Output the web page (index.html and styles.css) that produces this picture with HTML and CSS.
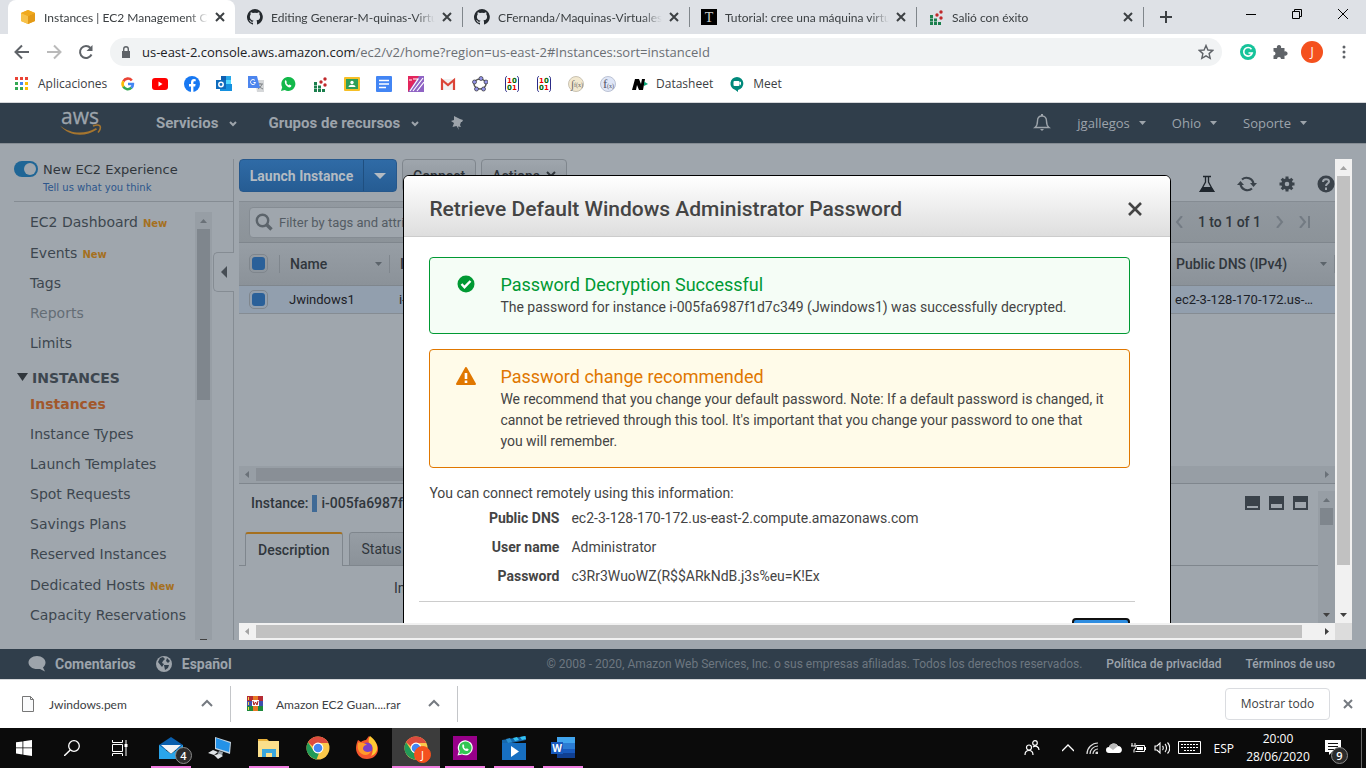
FILE: index.html
```html
<!DOCTYPE html>
<html lang="es">
<head>
<meta charset="utf-8">
<title>Instances | EC2 Management Console</title>
<link rel="stylesheet" href="styles.css">
</head>
<body>
<svg class="defs" aria-hidden="true">
  <symbol id="x" viewBox="0 0 16 16"><path d="M4 4l8 8M12 4l-8 8" stroke="currentColor" stroke-width="2" fill="none"/></symbol>
  <symbol id="github" viewBox="0 0 16 16"><path fill="#24292e" d="M8 0a8 8 0 0 0-2.500 15.600c.4.1.5-.2.5-.4v-1.500c-2.200.5-2.700-.9-2.700-.9-.4-.9-.9-1.200-.9-1.200-.7-.5.1-.5.1-.5.8.1 1.200.8 1.200.8.7 1.300 1.900.9 2.300.7.1-.5.3-.9.5-1.100-1.800-.2-3.600-.9-3.600-4 0-.8.3-1.600.8-2.100-.1-.2-.4-1 .1-2.100 0 0 .7-.2 2.200.8a7.500 7.500 0 0 1 4 0c1.500-1 2.200-.8 2.200-.8.400 1.100.2 1.900.1 2.100.5.600.8 1.300.8 2.100 0 3.100-1.900 3.700-3.700 3.900.3.300.6.8.6 1.500v2.200c0 .2.100.5.600.4A8 8 0 0 0 8 0z"/></symbol>
  <symbol id="dots" viewBox="0 0 16 16"><path fill="#1b7f4d" d="M2 6h3v3H2zM2 9.500h3v3H2zM6 9.500h3v3H6zM2 13h3v3H2zM6 13h3v3H6zM10 13h3v3h-3z"/><g fill="#c0292b"><circle cx="9" cy="6" r="1.700"/><circle cx="13" cy="3" r="1.700"/><circle cx="13" cy="9" r="1.700"/></g></symbol>
  <symbol id="chrome" viewBox="0 0 24 24"><circle cx="12" cy="12" r="11.500" fill="#fbc84a"/><path fill="#dc4b3e" d="M2 6.300A11.500 11.500 0 0 1 22.300 7H12a5 5 0 0 0-4.800 3.700z"/><path fill="#229a58" d="M2 6.300l5.500 8.200A5 5 0 0 0 13 17l-2.500 6.400A11.500 11.500 0 0 1 2 6.300z"/><circle cx="12" cy="12" r="5.400" fill="#fff"/><circle cx="12" cy="12" r="4.300" fill="#4285f4"/></symbol>
  <symbol id="up" viewBox="0 0 17 17"><path fill="currentColor" d="M5 11h7L8.500 7z"/></symbol>
  <symbol id="down" viewBox="0 0 17 17"><path fill="currentColor" d="M5 7h7l-3.500 4z"/></symbol>
  <symbol id="left" viewBox="0 0 17 17"><path fill="currentColor" d="M10 5v7L6 8.500z"/></symbol>
  <symbol id="right" viewBox="0 0 17 17"><path fill="currentColor" d="M7 5v7l4-3.500z"/></symbol>
  <symbol id="chev" viewBox="0 0 12 12"><path d="M1 8l5-5 5 5" stroke="currentColor" stroke-width="2" fill="none"/></symbol>
  <symbol id="matrix" viewBox="0 0 16 16"><path d="M3 .5C1.500.5 1.500 2 1.500 3v10c0 1 0 2.500 1.500 2.500M13 .5c1.500 0 1.500 1.500 1.500 2.500v10c0 1 0 2.500-1.500 2.500" fill="none" stroke="#2b2b87"/><g font-family="DejaVu Sans" font-weight="bold" font-size="7"><text x="3" y="7" fill="#e00">1</text><text x="8" y="7" fill="#060">0</text><text x="3" y="14" fill="#060">0</text><text x="8" y="14" fill="#e00">1</text></g></symbol>
</svg>

<header class="tabstrip">
  <div class="tab tab-active">
    <svg class="i16" viewBox="0 0 16 16"><path fill="#f2b022" d="M8 1l7 3v8l-7 3-7-3V4z"/><path fill="#e39a17" d="M8 7l7-3v8l-7 3z"/><path fill="#f7c24a" d="M1 4l7 3v8l-7-3z"/><path fill="#f0a91d" d="M1 4l7-3 7 3-7 3z"/></svg>
    <span class="tab-title">Instances | EC2 Management Console</span>
    <button class="tab-x" aria-label="Cerrar"><svg class="i16"><use href="#x"/></svg></button>
  </div>
  <div class="tab"><svg class="i16"><use href="#github"/></svg><span class="tab-title">Editing Generar-M-quinas-Virtuales</span><button class="tab-x" aria-label="Cerrar"><svg class="i16"><use href="#x"/></svg></button></div>
  <div class="tab tab-line"><svg class="i16"><use href="#github"/></svg><span class="tab-title">CFernanda/Maquinas-Virtuales-en</span><button class="tab-x" aria-label="Cerrar"><svg class="i16"><use href="#x"/></svg></button></div>
  <div class="tab tab-line"><svg class="i16" viewBox="0 0 16 16"><path d="M0 0h16v16H0z"/><text x="8" y="13" fill="#ccc" font-family="Liberation Serif" font-size="14" text-anchor="middle">T</text></svg><span class="tab-title">Tutorial: cree una máquina virtual</span><button class="tab-x" aria-label="Cerrar"><svg class="i16"><use href="#x"/></svg></button></div>
  <div class="tab tab-line"><svg class="i16"><use href="#dots"/></svg><span class="tab-title">Salió con éxito</span><button class="tab-x" aria-label="Cerrar"><svg class="i16"><use href="#x"/></svg></button></div>
  <button class="tab-new tab-line" aria-label="Nueva pestaña"><svg class="i16" viewBox="0 0 16 16"><path d="M8 2v12M2 8h12" stroke="#3c4043" stroke-width="2"/></svg></button>
  <div class="win">
    <button aria-label="Minimizar"><svg class="i12" viewBox="0 0 12 12"><path d="M1 6.500h10" stroke="#000"/></svg></button>
    <button aria-label="Restaurar"><svg class="i12" viewBox="0 0 12 12"><path d="M1.500 3.500h7v7h-7zM3.500 3V1.500h7v7H9" stroke="#000" fill="none"/></svg></button>
    <button aria-label="Cerrar ventana"><svg class="i12" viewBox="0 0 12 12"><path d="M1 1l10 10M11 1L1 11" stroke="#000"/></svg></button>
  </div>
</header>

<div class="toolbar">
  <button aria-label="Atrás"><svg class="i16" viewBox="0 0 16 16"><path d="M15 8H2M8 1.500L1.500 8 8 14.500" stroke="#5f6368" stroke-width="2" fill="none"/></svg></button>
  <button aria-label="Adelante"><svg class="i16" viewBox="0 0 16 16"><path d="M1 8h13M8 1.500L14.500 8 8 14.500" stroke="#bababa" stroke-width="2" fill="none"/></svg></button>
  <button aria-label="Recargar"><svg class="i16" viewBox="0 0 16 16"><path d="M13.500 10.500A6 6 0 1 1 12.500 4" stroke="#5f6368" stroke-width="2" fill="none"/><path d="M14.500 1v6h-6z" fill="#5f6368"/></svg></button>
  <div class="omnibox">
    <svg class="i12" viewBox="0 0 12 12"><path d="M2 5h8v7H2z" fill="#5f6368"/><path d="M3.700 5V3a2.300 2.300 0 0 1 4.600 0v2" stroke="#5f6368" fill="none" stroke-width="1.400"/></svg>
    <span class="url"><b>us-east-2.console.aws.amazon.com</b>/ec2/v2/home?region=us-east-2#Instances:sort=instanceId</span>
    <svg class="i16" viewBox="0 0 16 16"><path d="M8 1.500l1.900 4.500 4.900.4-3.700 3.200 1.100 4.800L8 11.900l-4.200 2.500 1.100-4.800L1.200 6.400l4.900-.4z" fill="none" stroke="#5f6368" stroke-width="1.400"/></svg>
  </div>
  <div class="ext">
    <svg class="i16" viewBox="0 0 16 16"><circle cx="8" cy="8" r="8" fill="#15c39a"/><path d="M11.500 5.200A4.300 4.300 0 1 0 12.200 9H8.500" stroke="#fff" stroke-width="1.600" fill="none"/></svg>
    <svg class="i16" viewBox="0 0 16 16"><path fill="#5f6368" d="M1.500 4H5a2.200 2.200 0 1 1 4 0h3.500v3.500a2.200 2.200 0 1 1 0 4V15H9a2 2 0 1 0-4 0H1.500v-3.500a2 2 0 1 0 0-4z"/></svg>
    <span class="avatar">J</span>
    <svg class="i16" viewBox="0 0 16 16"><g fill="#5f6368"><circle cx="8" cy="3" r="1.500"/><circle cx="8" cy="8" r="1.500"/><circle cx="8" cy="13" r="1.500"/></g></svg>
  </div>
</div>

<nav class="bookmarks">
  <a href="#" class="bm-apps"><svg class="i14" viewBox="0 0 14 14"><path fill="#ea4335" d="M0 0h3v3H0zM5 0h3v3H5zM10 0h3v3h-3z"/><path fill="#34a853" d="M0 5h3v3H0zM0 10h3v3H0zM5 10h3v3H5z"/><path fill="#4285f4" d="M5 5h3v3H5z"/><path fill="#fbbc05" d="M10 5h3v3h-3zM10 10h3v3h-3z"/></svg>Aplicaciones</a>
  <a href="#" aria-label="Google"><svg class="i16" viewBox="0 0 16 16" fill="none" stroke-width="2.600"><path d="M3.400 5.300A5 5 0 0 1 11.800 4.500" stroke="#ea4335"/><path d="M3.400 5.300a5 5 0 0 0 0 5.400" stroke="#fbbc05"/><path d="M3.400 10.700a5 5 0 0 0 8 1" stroke="#34a853"/><path d="M11.300 11.800A5 5 0 0 0 12.900 8H8" stroke="#4285f4"/></svg></a>
  <a href="#" aria-label="YouTube"><svg class="i16" viewBox="0 0 16 16"><rect y="2" width="16" height="12" rx="3" fill="#f00"/><path d="M6.500 5.500v5l4-2.500z" fill="#fff"/></svg></a>
  <a href="#" aria-label="Facebook"><svg class="i16" viewBox="0 0 16 16"><circle cx="8" cy="8" r="8" fill="#1778f2"/><path fill="#fff" d="M7 16v-5.500H5V8h2V6.300C7 4.200 8.200 3 10 3l1.700.2v2h-1C9.700 5.200 9.400 5.700 9.400 6.500V8h2.200l-.4 2.500H9.400V16z"/></svg></a>
  <a href="#" aria-label="Outlook"><svg class="i16" viewBox="0 0 16 16"><path fill="#28a8ea" d="M5 0h10v8H5z"/><path fill="#0f5fb0" d="M5 0h5v5H5z"/><path fill="#1490df" d="M4 8h12v7H4z"/><path fill="#50d9ff" d="M10 4h5v4h-5z"/><rect y="4" width="10" height="9" fill="#0f6cbd"/><circle cx="5" cy="8.500" r="2.200" fill="none" stroke="#fff" stroke-width="1.500"/></svg></a>
  <a href="#" aria-label="Traductor"><svg class="i16" viewBox="0 0 16 16"><path fill="#d5d7d9" d="M7 4h9v12H9z"/><path d="M9 8h6M12 7v1M14 8c-1 3-3 4-4 5M10 9c1 2 3 3 5 4" stroke="#7e8285" fill="none"/><path fill="#4c85ee" d="M0 0h9l3 12H0z"/><path d="M7 4.500A2.500 2.500 0 1 0 7.500 6.500H5.500" fill="none" stroke="#fff"/></svg></a>
  <a href="#" aria-label="WhatsApp"><svg class="i16" viewBox="0 0 16 16"><path fill="#12b84a" d="M1 15l1.200-3.700A7 7 0 1 1 4.800 14z"/><path fill="#fff" d="M5 4.500l1-.2.900 1.900-.6.900c.5 1 1.300 1.700 2.400 2.200l.8-.8 1.900.9c0 1.200-.9 2-2 2C7.300 11.200 4 8 5 4.500z"/></svg></a>
  <a href="#" aria-label="Académico"><svg class="i16"><use href="#dots"/></svg></a>
  <a href="#" aria-label="Classroom"><svg class="i16" viewBox="0 0 16 16"><rect y="1" width="16" height="14" rx="1" fill="#f6bf26"/><path fill="#2e9e58" d="M2 3h12v10H2z"/><circle cx="8" cy="6.500" r="1.700" fill="#fff"/><path d="M4.500 11c0-3 7-3 7 0z" fill="#fff"/></svg></a>
  <a href="#" aria-label="Documentos"><svg class="i16" viewBox="0 0 16 16"><rect width="16" height="16" rx="1" fill="#4285f4"/><path d="M3 4.500h10M3 8h10M3 11.500h7" stroke="#fff" stroke-width="1.700"/></svg></a>
  <a href="#" aria-label="Editor"><svg class="i16" viewBox="0 0 16 16"><path fill="#8f63c4" d="M0 0h16v16H0z"/><path fill="#e3255c" d="M0 0h11L0 16z"/><path d="M1 4h3M5 3h5L2 15M15 2L5 15M16 6l-7 9" stroke="#fff" fill="none" stroke-width="1.200"/></svg></a>
  <a href="#" aria-label="Gmail"><svg class="i16" viewBox="0 0 16 16"><path fill="#f1f1f1" d="M1 3h14v11H1z"/><path fill="none" stroke="#db4437" stroke-width="2.200" d="M2 14V4l6 5 6-5v10"/></svg></a>
  <a href="#" aria-label="GeoGebra"><svg class="i16" viewBox="0 0 16 16"><ellipse cx="8" cy="8" rx="6" ry="5" fill="none" stroke="#555" stroke-width="1.400"/><g fill="#9393e8" stroke="#333" stroke-width=".7"><circle cx="9" cy="2.500" r="2"/><circle cx="2.500" cy="6" r="2"/><circle cx="14" cy="6" r="2"/><circle cx="4.500" cy="13" r="2"/><circle cx="11.500" cy="13" r="2"/></g></svg></a>
  <a href="#" aria-label="Matrices"><svg class="i16"><use href="#matrix"/></svg></a>
  <a href="#" aria-label="Matrices 2"><svg class="i16"><use href="#matrix"/></svg></a>
  <a href="#" aria-label="Integrales"><svg class="i16" viewBox="0 0 16 16"><circle cx="8" cy="8" r="7.500" fill="#f2e8cf" stroke="#c9c2b2"/><text x="3" y="12" font-family="Liberation Serif" font-size="11" fill="#666">∫</text><text x="6" y="11" font-family="Liberation Serif" font-size="6" fill="#666">f(x)</text></svg></a>
  <a href="#" aria-label="Derivadas"><svg class="i16" viewBox="0 0 16 16"><circle cx="8" cy="8" r="7.500" fill="#dfe6f7" stroke="#bcc3d4"/><text x="3" y="12" font-family="Liberation Serif" font-size="13" fill="#556">f</text><text x="7" y="12" font-family="Liberation Serif" font-size="6" fill="#556">(x)</text></svg></a>
  <a href="#"><svg class="i16" viewBox="0 0 16 16"><path d="M0 14L3 3h4l2 5 1-5h3l-2 11H7L5 9l-1 5z"/><path fill="#0ba678" d="M12 5.500l4 2.500-4 2z"/></svg>Datasheet</a>
  <a href="#" class="meet"><svg class="i16" viewBox="0 0 16 16"><path fill="#00897b" d="M8 1a6.500 6.500 0 0 1 1 12.900V16L6 13.700A6.500 6.500 0 0 1 8 1z"/><rect x="4.500" y="5" width="6" height="5" rx="1" fill="#fff"/><path fill="#fff" d="M10 7l2-1.500v4z"/></svg>Meet</a>
</nav>

<div class="awsnav">
  <a href="#" class="aws-logo" aria-label="AWS"><svg viewBox="0 0 42 30"><text x="20" y="16" font-family="Open Sans" font-size="21" fill="#9da4ab" stroke="#9da4ab" stroke-width=".3" text-anchor="middle">aws</text><path d="M0 17.500c11 9 25 9 36 2.500l1 1.500c-12 8-28 7-37-4z" fill="#a5752f"/><path d="M33 18c3-1.200 6-1.200 7 0s0 4.500-2 6.500" fill="none" stroke="#a5752f" stroke-width="1.600"/></svg></a>
  <button class="nav-main">Servicios <svg class="i10" viewBox="0 0 10 10"><path d="M2 4l3 3 3-3" stroke="currentColor" stroke-width="2" fill="none"/></svg></button>
  <button class="nav-main">Grupos de recursos <svg class="i10" viewBox="0 0 10 10"><path d="M2 4l3 3 3-3" stroke="currentColor" stroke-width="2" fill="none"/></svg></button>
  <button class="nav-pin" aria-label="Fijar"><svg class="i14" viewBox="0 0 14 14"><path fill="currentColor" d="M4 0l6 3 3 1-1 2-1 0-1 3 1 2-3-.5L9 14l-2.500-4-4 1 1.500-4L1 5l3-1z"/></svg></button>
  <div class="nav-right">
    <button aria-label="Alertas"><svg class="i18" viewBox="0 0 18 18"><path d="M2 13.500c2-1.500 2.500-4 2.500-6.500C4.500 4 6 2 9 2s4.500 2 4.500 5 .5 5 2.500 6.500z" fill="none" stroke="currentColor" stroke-width="1.400"/><path d="M7 15h4l-2 2zM8 0h2v2H8z" fill="currentColor"/></svg></button>
    <button>jgallegos <svg class="i8" viewBox="0 0 8 8"><path d="M1 2h7L4.500 6z" fill="currentColor"/></svg></button>
    <button>Ohio <svg class="i8" viewBox="0 0 8 8"><path d="M1 2h7L4.500 6z" fill="currentColor"/></svg></button>
    <button>Soporte <svg class="i8" viewBox="0 0 8 8"><path d="M1 2h7L4.500 6z" fill="currentColor"/></svg></button>
  </div>
</div>

<div class="console">
  <aside class="side">
    <div class="exp">
      <input type="checkbox" id="exp" class="switch" checked>
      <div><label for="exp">New EC2 Experience</label><a href="#">Tell us what you think</a></div>
    </div>
    <div class="side-scroll">
      <ul class="menu">
        <li class="tall"><a href="#">EC2 Dashboard</a><em>New</em></li>
        <li class="tall"><a href="#">Events</a><em>New</em></li>
        <li><a href="#">Tags</a></li>
        <li><a href="#" class="dim">Reports</a></li>
        <li><a href="#">Limits</a></li>
        <li class="group"><svg class="i12" viewBox="0 0 12 12"><path d="M1 1h11L6.500 9z" fill="#30363c"/></svg>INSTANCES</li>
        <li class="after"><a href="#" class="current">Instances</a></li>
        <li><a href="#">Instance Types</a></li>
        <li><a href="#">Launch Templates</a></li>
        <li><a href="#">Spot Requests</a></li>
        <li><a href="#">Savings Plans</a></li>
        <li><a href="#">Reserved Instances</a></li>
        <li class="tall"><a href="#">Dedicated Hosts</a><em>New</em></li>
        <li><a href="#">Capacity Reservations</a></li>
      </ul>
      <div class="sb sb-v sb-dim"><svg><use href="#up"/></svg><i class="thumb side-thumb"></i><i class="push nub"></i></div>
    </div>
    <button class="collapse" aria-label="Contraer"><svg viewBox="0 0 8 12" width="8" height="12"><path d="M7 0v12L1 6z" fill="#464d54"/></svg></button>
  </aside>

  <div class="work">
    <div class="stage">
      <main class="page">
        <div class="actions">
          <div class="split"><button>Launch Instance</button><button aria-label="Más"><svg viewBox="0 0 12 6" width="12" height="6"><path d="M0 0h12L6 6z" fill="#b4bbc2"/></svg></button></div>
          <button class="btn">Connect</button>
          <button class="btn">Actions <svg class="i10" viewBox="0 0 10 10"><path d="M1 1l4 4 4-4M1 5l4 4 4-4" stroke="currentColor" stroke-width="2" fill="none"/></svg></button>
          <div class="tools">
            <button aria-label="Laboratorio"><svg class="i18" viewBox="0 0 18 18"><path d="M5 1.500h8M7.500 2v5l-5 9.300h13L10.500 7V2" fill="none" stroke="#1f262d" stroke-width="1.300"/><path d="M4.500 12h9L17 17H1z" fill="#1f262d"/></svg></button>
            <button aria-label="Actualizar"><svg viewBox="0 0 20 18" width="20" height="18"><path d="M5 4.500A7 7 0 0 1 16.500 9M15 13.500A7 7 0 0 1 3.500 9" fill="none" stroke="#3a424a" stroke-width="2.200"/><path d="M13 8h7l-3.500 4zM0 10h7L3.500 6z" fill="#3a424a"/></svg></button>
            <button aria-label="Ajustes"><svg class="i18" viewBox="0 0 18 18"><circle cx="9" cy="9" r="4" fill="none" stroke="#3a424a" stroke-width="3.400"/><path d="M9 1.500v3M9 13.500v3M1.500 9h3M13.500 9h3M3.700 3.700l2 2M12.300 12.300l2 2M14.300 3.700l-2 2M3.700 14.300l2-2" stroke="#3a424a" stroke-width="3"/></svg></button>
            <button aria-label="Ayuda"><svg class="i18" viewBox="0 0 18 18"><circle cx="9" cy="9" r="8.500" fill="#3a424a"/><path d="M6 7c0-4 6-3.500 6-.5C12 8.500 9 8.500 9 11M9 12.500V15" fill="none" stroke="#9fa6ad" stroke-width="2"/></svg></button>
          </div>
        </div>
        <div class="filter">
          <label class="search"><svg class="i18" viewBox="0 0 18 18"><circle cx="7.500" cy="7.500" r="5.700" fill="none" stroke="#5c646b" stroke-width="2.400"/><path d="M11.500 11.500l5 5" stroke="#5c646b" stroke-width="3.400"/></svg><input type="text" aria-label="Filtro" placeholder="Filter by tags and attributes"></label>
          <div class="pager">
            <svg viewBox="0 0 8 12" width="8" height="12"><path d="M7 0L2 6l5 6" fill="none" stroke="#737b83" stroke-width="2"/></svg>
            <span>1 to 1 of 1</span>
            <svg viewBox="0 0 8 12" width="8" height="12"><path d="M1 0l5 6-5 6" fill="none" stroke="#737b83" stroke-width="2"/></svg>
            <svg viewBox="0 0 12 12" width="12" height="12"><path d="M1 0l5 6-5 6M10 0v12" fill="none" stroke="#737b83" stroke-width="2"/></svg>
          </div>
        </div>
        <table class="grid">
          <colgroup><col class="c-check"><col class="c-name"><col><col class="c-dns"></colgroup>
          <thead><tr><th><input type="checkbox" class="tick" checked aria-label="Todas"></th><th><span class="th">Name<svg class="i8" viewBox="0 0 8 8"><path d="M1 2h7L4.500 6z" fill="#5c646b"/></svg></span></th><th><span class="th">ID</span></th><th><span class="th">Public DNS (IPv4)<svg class="i8" viewBox="0 0 8 8"><path d="M1 2h7L4.500 6z" fill="#5c646b"/></svg></span></th></tr></thead>
          <tbody><tr><td><input type="checkbox" class="tick" checked aria-label="Jwindows1"></td><td>Jwindows1</td><td>i-005fa</td><td>ec2-3-128-170-172.us-…</td></tr></tbody>
        </table>
        <div class="sb sb-h sb-dim grid-sb"><svg><use href="#left"/></svg><i class="thumb"></i><svg class="push"><use href="#right"/></svg></div>
        <section class="detail">
          <div class="detail-body">
            <div class="detail-head"><b>Instance:</b><i class="mark"></i><b>i-005fa6987f</b>
              <div class="panes"><i class="pane p1"></i><i class="pane p2"></i><i class="pane p3"></i></div></div>
            <div class="dtabs"><button class="dtab on">Description</button><button class="dtab">Status</button></div>
            <p class="field">Instance</p>
          </div>
          <div class="sb sb-v sb-dim"><svg><use href="#up"/></svg><i class="thumb detail-thumb"></i><svg class="push dark"><use href="#down"/></svg></div>
        </section>
      </main>

      <div class="overlay">
        <div class="modal" role="dialog" aria-labelledby="mt">
          <div class="modal-head"><h2 id="mt">Retrieve Default Windows Administrator Password</h2><button aria-label="Cerrar"><svg class="i14" viewBox="0 0 14 14"><path d="M1 1l12 12M13 1L1 13" stroke="#444" stroke-width="2.600"/></svg></button></div>
          <div class="modal-body">
            <div class="alert ok">
              <svg class="i18" viewBox="0 0 18 18"><circle cx="9" cy="9" r="8.500" fill="#093"/><path d="M4.500 9l3 3.200L13.500 6" fill="none" stroke="#fff" stroke-width="2.400"/></svg>
              <div><h3>Password Decryption Successful</h3><p>The password for instance i-005fa6987f1d7c349 (Jwindows1) was successfully decrypted.</p></div>
            </div>
            <div class="alert warn">
              <svg viewBox="0 0 20 18" width="20" height="18"><path d="M10 1l9 16H1z" fill="#e07700" stroke="#e07700" stroke-width="2" stroke-linejoin="round"/><path d="M10 6v6M10 13.500V16" stroke="#fff" stroke-width="2.600"/></svg>
              <div><h3>Password change recommended</h3><p>We recommend that you change your default password. Note: If a default password is changed, it cannot be retrieved through this tool. It's important that you change your password to one that you will remember.</p></div>
            </div>
            <p class="lead">You can connect remotely using this information:</p>
            <dl class="info">
              <dt>Public DNS</dt><dd>ec2-3-128-170-172.us-east-2.compute.amazonaws.com</dd>
              <dt>User name</dt><dd>Administrator</dd>
              <dt>Password</dt><dd>c3Rr3WuoWZ(R$$ARkNdB.j3s%eu=K!Ex</dd>
            </dl>
          </div>
          <div class="modal-foot"><button aria-label="Close"></button></div>
        </div>
      </div>
    </div>
    <div class="sb sb-v"><svg class="soft"><use href="#up"/></svg><i class="thumb stage-v"></i><svg class="push dark"><use href="#down"/></svg></div>
    <div class="sb sb-h"><svg class="soft"><use href="#left"/></svg><i class="thumb stage-h"></i><svg class="push dark"><use href="#right"/></svg></div>
    <div class="corner"></div>
  </div>
</div>

<footer class="awsfoot">
  <a href="#" class="strong"><svg class="i18" viewBox="0 0 18 18"><path fill="currentColor" d="M9 1c5 0 8.500 3 8.500 6.500 0 2-1 3.800-2.500 5l2 4-5-2.600C5 15 .5 11.500.5 7.500.5 4 4 1 9 1z"/></svg>Comentarios</a>
  <a href="#" class="strong"><svg class="i18" viewBox="0 0 18 18"><circle cx="9" cy="9" r="8" fill="currentColor"/><path fill="#303e4b" d="M5 3l3-1 2 2-2 2-1 2 2 1-2 3-4-5zM12 3l3 3-2 2-2-2zM9 10l5 0-1 3-3 2z"/></svg>Español</a>
  <span class="copy">© 2008 - 2020, Amazon Web Services, Inc. o sus empresas afiliadas. Todos los derechos reservados.</span>
  <a href="#">Política de privacidad</a>
  <a href="#">Términos de uso</a>
</footer>

<div class="downloads">
  <div class="dl"><svg class="i16" viewBox="0 0 16 16"><path d="M2.500.5h8l3 3v12h-11z" fill="#fafbfc" stroke="#777"/><path d="M10.500.5v3h3" fill="none" stroke="#777"/></svg><span>Jwindows.pem</span><button aria-label="Opciones"><svg class="i12"><use href="#chev"/></svg></button></div>
  <div class="dl"><svg class="i16" viewBox="0 0 16 16"><path fill="#b52b34" d="M0 0h16v5H0z"/><path fill="#3f4fae" d="M0 5h16v5H0z"/><path fill="#1e8a3c" d="M0 10h16v5H0z"/><path fill="#e87a25" d="M6 0h5v15H6z"/><path fill="#fff" d="M5 4h7v6H5z"/><path d="M6 5l1 4 1.500-3L10 9l1-4" stroke="#a11" fill="none"/><path d="M1.500 1v3M1.500 6v3M1.500 11v3" stroke="#f5d54a"/></svg><span>Amazon EC2 Guan....rar</span><button aria-label="Opciones"><svg class="i12"><use href="#chev"/></svg></button></div>
  <button class="showall">Mostrar todo</button>
  <button class="dl-x" aria-label="Cerrar"><svg class="i16"><use href="#x"/></svg></button>
</div>

<div class="taskbar">
  <div class="sys">
    <button aria-label="Inicio"><svg class="i16" viewBox="0 0 16 16"><path fill="#fff" d="M0 2.300L6.500 1.400v6.100H0zM7.300 1.300L16 0v7.500H7.300zM0 8.300h6.500v6.200L0 13.600zM7.300 8.300H16V16l-8.700-1.300z"/></svg></button>
    <button aria-label="Buscar"><svg class="i16" viewBox="0 0 16 16"><circle cx="10" cy="6" r="5.300" fill="none" stroke="#fff" stroke-width="1.300"/><path d="M6.300 10L0 16" stroke="#fff" stroke-width="1.500"/></svg></button>
    <button aria-label="Vista de tareas"><svg class="i16" viewBox="0 0 16 16"><path d="M.5 0v2.500h10V0M.5 16v-2.500h10V16M.5 4.500h10v7H.5zM14 0v16" fill="none" stroke="#fff"/><path fill="#fff" d="M12.500 4h3v3h-3z"/></svg></button>
  </div>
  <div class="apps">
    <button class="app run" aria-label="Correo"><svg class="i24" viewBox="0 0 24 24"><path fill="#0a5fae" d="M0 9L12 1l12 8v5H0z"/><path fill="#f2f4f7" d="M2 9h20l-10 9z"/><path fill="#2aa5ea" d="M0 9l12 9 12-9v14H0z"/></svg><span class="badge">4</span></button>
    <button class="app" aria-label="Equipo"><svg class="i24" viewBox="0 0 24 24"><path fill="#c3d4e2" d="M7 1l16 5-1 12-15-5z"/><path fill="#2492e8" d="M8 2l14 5-1 9-13-4z"/><path fill="#9aa3aa" d="M11 15l4 1-1 4-5-1z"/><path fill="#dfe3e6" d="M0 17l5-3 5 2-4 3zM6 19l6-1 3 2-5 3z"/></svg></button>
    <button class="app run" aria-label="Explorador"><svg class="i24" viewBox="0 0 24 24"><path fill="#e9b13b" d="M1 3h9l2 2h10v3H1z"/><path fill="#fbdf8b" d="M1 5h21v16H1z"/><path fill="#3aa7dd" d="M5 21v-8h14v8h-4v-4H9v4z"/></svg></button>
    <button class="app" aria-label="Chrome"><svg class="i24"><use href="#chrome"/></svg></button>
    <button class="app" aria-label="Firefox"><svg class="i24" viewBox="0 0 24 24"><path fill="#f5562d" d="M12 23C5 23 1 18 1 12c0-3 1-6 2-8l3 2c1-1 3-2 5-2l3-4c1 2 4 3 6 6 2 2 3 4 3 7 0 6-5 10-11 10z"/><path fill="#ffc933" d="M15 0c5 4 8 8 7 14-1 3-3 5-6 6 3-5 2-10-2-13-1-3 0-5 1-7z"/><circle cx="12" cy="12" r="5.500" fill="#7b3fc9"/><path fill="#ff9a2b" d="M3 7c3-1 7 0 9 2-3 0-4 2-4 4 1 3 5 4 8 2-1 4-6 5-9 3-4-2-5-7-4-11z"/></svg></button>
    <button class="app run on" aria-label="Chrome J"><svg class="i24"><use href="#chrome"/></svg><span class="badge badge-j">J</span></button>
    <button class="app run" aria-label="WhatsApp"><svg class="i24" viewBox="0 0 24 24"><path fill="#980089" d="M0 0h24v24H0z"/><path fill="#fff" d="M4.500 19.500l1.200-4A7.500 7.500 0 1 1 9 18.600z"/><path fill="#34c653" d="M6 18.200l.9-3A6.300 6.300 0 1 1 9.200 17.400z"/><path fill="#fff" d="M9.500 8.500l1-.2.900 1.900-.6.800c.5 1 1.200 1.600 2.200 2.100l.8-.8 1.800.9c0 1.200-.9 1.800-1.900 1.800-2.400-.1-5.200-3-4.200-6.500z"/></svg></button>
    <button class="app run" aria-label="Películas"><svg class="i24" viewBox="0 0 24 24"><path fill="#1668ad" d="M0 4l24-4v4L0 9z"/><path fill="#35c4f2" d="M11 2l4-1 2 3-4 1zM18 1l5-1 1 3-4 1z"/><path fill="#2a8fd0" d="M4 3l4-1 2 4-4 1z"/><path fill="#176fc1" d="M0 7h24v17H0z"/><path fill="#fff" d="M9 10v11l8-5.500z"/></svg></button>
    <button class="app run" aria-label="Word"><svg class="i24" viewBox="0 0 24 24"><path fill="#41a5ee" d="M6 1h18v6H6z"/><path fill="#2b7cd3" d="M6 7h18v6H6z"/><path fill="#185abd" d="M6 13h18v4H6z"/><path fill="#103f91" d="M6 17h18v5H6z"/><path fill="#185abd" d="M0 6h12v12H0z"/><text x="6" y="16" font-family="Open Sans" font-size="10" font-weight="bold" fill="#fff" text-anchor="middle">W</text></svg></button>
  </div>
  <div class="tray">
    <svg class="i16" viewBox="0 0 16 16" fill="none" stroke="#fff" stroke-width="1.200"><circle cx="5" cy="7.500" r="2.500"/><path d="M1 15c0-6 8-6 8 0"/><circle cx="11" cy="3" r="2.300"/><path d="M9 7c3-2 6 0 6 3"/></svg>
    <svg class="i12 t-chev" viewBox="0 0 12 12"><path d="M0 9l6-6 6 6" fill="none" stroke="#fff" stroke-width="1.300"/></svg>
    <svg class="i12" viewBox="0 0 12 12" fill="none" stroke="#ddd" stroke-width="1.200"><path d="M1 12A11 11 0 0 1 12 1M4 12a8 8 0 0 1 8-8M7 12a5 5 0 0 1 5-5"/><circle cx="11" cy="11" r="1" fill="#fff"/></svg>
    <svg class="i16" viewBox="0 0 16 16"><path fill="#fff" d="M3 13a3 3 0 0 1 0-6c1-4 7-5 9-1 5 0 5 7 1 7z"/><path fill="#bbb" d="M3 7c1-4 7-5 9-1l-5 4z"/></svg>
    <svg class="i16" viewBox="0 0 16 16"><path d="M6 5.500h8.500v6H5.500M2 3v3M5 3v3M1 6h5v2L4 9.500v3" fill="none" stroke="#fff"/><path fill="#fff" d="M7 7h6v3H7zM15 7h1v3h-1z"/></svg>
    <svg class="i16" viewBox="0 0 16 16" fill="none" stroke="#fff" stroke-width="1.100"><path d="M1 6h2l3-3v10l-3-3H1zM8.500 6c1 1 1 3 0 4M11 4c2 2 2 6 0 8M13.500 2.500c3 3 3 8 0 11"/></svg>
    <svg viewBox="0 0 24 14" width="24" height="14"><path d="M.5.500h22v12H.5z" fill="none" stroke="#fff"/><path d="M3 3.500h18M3 6.500h18M6 9.500h11" stroke="#fff" stroke-dasharray="2 1"/></svg>
    <span class="lang">ESP</span>
    <span class="clock">20:00<br>28/06/2020</span>
    <div class="note"><svg class="i16" viewBox="0 0 16 16"><path fill="#fff" d="M0 0h16v12H7l-3 3v-3H0z"/><path d="M3 3.500h10M3 6.500h10M3 9.500h6" stroke="#111"/></svg><span class="badge">9</span></div>
    <i class="peek"></i>
  </div>
</div>
</body>
</html>
```

FILE: styles.css
```css
* { box-sizing: border-box; }
body { margin: 0; height: 100vh; display: flex; flex-direction: column; overflow: hidden; background: #9fa6ad; font: 12px "Open Sans", "Noto Sans", sans-serif; color: #3c4043; }
button { border: 0; padding: 0; background: none; font: inherit; color: inherit; display: flex; align-items: center; justify-content: center; }
a { color: inherit; text-decoration: none; }
svg { display: block; flex: none; }
p, h2, h3, dl, dd, ul { margin: 0; padding: 0; }
.defs { width: 0; height: 0; position: absolute; }
.i8 { width: 8px; height: 8px; }
.i10 { width: 10px; height: 10px; }
.i12 { width: 12px; height: 12px; }
.i14 { width: 14px; height: 14px; }
.i16 { width: 16px; height: 16px; }
.i18 { width: 18px; height: 18px; }
.i24 { width: 24px; height: 24px; }

/* browser tabs */
.tabstrip { flex: none; height: 34px; display: flex; padding-left: 8px; background: #dee1e6; }
.tab { width: 227px; display: flex; align-items: center; gap: 8px; padding: 0 7px 0 12px; position: relative; }
.tab-active { background: #fff; border-radius: 8px 8px 0 0; }
.tab-line { position: relative; }
.tab-line::before { content: ""; position: absolute; left: 0; top: 7px; height: 20px; width: 1px; background: #80868b; }
.tab-title { flex: 1; font-family: Lato, sans-serif; white-space: nowrap; overflow: hidden; mask-image: linear-gradient(90deg, #000 88%, transparent); }
.tab-x { margin-left: -4px; }
.tab-new { width: 46px; }
.win { margin-left: auto; display: flex; height: 28px; }
.win button { width: 46px; }

/* toolbar */
.toolbar { flex: none; height: 35px; display: flex; align-items: center; gap: 16px; padding: 1px 14px; background: #fff; }
.omnibox { flex: 1; height: 28px; display: flex; align-items: center; gap: 10px; padding: 0 8px 0 10px; margin-right: 2px; border-radius: 14px; background: #f1f3f4; }
.url { flex: 1; font-size: 13px; color: #6b6f74; white-space: nowrap; }
.url b { font-weight: 400; color: #202124; }
.ext { display: flex; align-items: center; gap: 16px; }
.ext .avatar { margin: 0 -3px; }
.avatar { width: 22px; height: 22px; border-radius: 50%; background: #f4511e; color: #fff; text-align: center; line-height: 22px; }

/* bookmarks */
.bookmarks { flex: none; height: 34px; display: flex; align-items: center; gap: 16px; padding: 0 15px 4px; background: #fff; border-bottom: 1px solid #d5d7da; }
.bookmarks a { display: flex; align-items: center; gap: 8px; }
.bookmarks .bm-apps { gap: 9px; width: 89px; }

/* console header */
.awsnav { flex: none; height: 40px; display: flex; align-items: center; padding-left: 60px; background: #303e4b; color: #9da4ab; }
.aws-logo svg { width: 42px; height: 30px; }
.nav-main { font: 700 15px Roboto, sans-serif; gap: 10px; margin-left: 54px; }
.nav-main + .nav-main { margin-left: 30px; }
.nav-pin { margin-left: 30px; }
.nav-right { margin-left: auto; display: flex; align-items: center; gap: 26px; padding-right: 59px; font-size: 13px; }
.nav-right button { gap: 8px; }

.console { flex: 1; min-height: 0; display: flex; padding: 15px 14px 9px; border-top: 1px solid #858c93; }

/* side menu */
.side { flex: none; width: 220px; display: flex; flex-direction: column; position: relative; border-right: 1px solid #858c93; font-family: "DejaVu Sans", sans-serif; font-size: 14px; color: #3d464f; margin-right: 5px; }
.exp { height: 43px; display: flex; gap: 5px; padding-top: 2px; border-bottom: 1px solid #858c93; }
.exp label { display: block; font-size: 13px; line-height: 18px; color: #30363c; }
.exp a { font-size: 10px; line-height: 18px; display: block; color: #2d568c; }
.switch { appearance: none; margin: 0; width: 24px; height: 16px; border-radius: 8px; background: #1f6696; display: flex; justify-content: flex-end; padding: 2px; }
.switch::before { content: ""; width: 12px; height: 12px; border-radius: 50%; background: #9fa6ad; }
.side-scroll { flex: 1; min-height: 0; display: flex; margin-top: 4px; padding-top: 6px; overflow: hidden; }
.menu { list-style: none; flex: 1; margin-top: -6px; white-space: nowrap; }
.menu li { height: 30px; padding-left: 16px; display: flex; align-items: center; gap: 5px; }
.menu .tall { height: 31px; }
.menu em { font: 700 10px "DejaVu Sans", sans-serif; color: #a5701f; padding-top: 3px; }
.menu .dim { color: #646d75; }
.menu .current { color: #a1572b; font-weight: 700; }
.menu .group { padding: 6px 0 0 2px; height: 34px; font-weight: 700; gap: 4px; }
.menu .after { height: 26px; padding-bottom: 2px; }
.menu .after + li { margin-top: 1px; }
.collapse { position: absolute; right: -1px; top: 93px; width: 21px; height: 40px; border: 1px solid #858c93; border-right: 0; border-radius: 5px 0 0 5px; background: #9fa6ad; }

/* scroll bars */
.sb { flex: none; display: flex; background: #f1f1f1; color: #6a7178; }
.sb-v { width: 17px; flex-direction: column; align-items: center; }
.sb-h { height: 17px; align-items: center; }
.sb svg { width: 17px; height: 17px; }
.sb .soft { color: #a3a3a3; }
.sb .dark { color: #404040; }
.sb-v .push { margin-top: auto; }
.sb-h .push { margin-left: auto; }
.thumb { background: #c1c1c1; }
.sb-v .thumb { width: 13px; }
.sb-h .thumb { height: 13px; }
.sb-dim { background: #979ea5; }
.sb-dim .thumb { background: #7f868d; }
.side .sb { margin-right: 21px; }
.side-thumb { height: 171px; }
.nub { width: 7px; height: 1px; background: #404040; }
.detail-thumb { height: 17px; }
.stage-v { height: 389px; flex-shrink: 1; }
.stage-h { width: 1046px; flex-shrink: 1; }
.corner { background: #dcdcdc; }

/* main work area */
.work { flex: 1; min-width: 0; display: grid; grid-template-columns: 1fr 17px; grid-template-rows: minmax(0, 1fr) 17px; }
.stage { position: relative; overflow: hidden; min-width: 0; }
.page { height: 100%; display: flex; flex-direction: column; font: 14px Roboto, sans-serif; color: #30363c; }
.actions { flex: none; height: 42px; display: flex; gap: 5px; align-items: flex-start; }
.actions > .btn, .split { height: 33px; }
.split { display: flex; width: 158px; border: 1px solid #26588c; border-radius: 4px; background: linear-gradient(#2f6ba6, #265c93); color: #b4bbc2; font-weight: 700; }
.split button:first-child { flex: 1; border-right: 1px solid #1f4f80; }
.split button:last-child { width: 32px; }
.btn { gap: 6px; padding: 0 10px; border: 1px solid #7f868d; border-radius: 4px; background: linear-gradient(#9fa6ad, #8b9299); font-weight: 500; }
.tools { margin-left: auto; height: 50px; display: flex; align-items: center; gap: 21px; }
.filter { flex: none; height: 42px; display: flex; align-items: center; justify-content: space-between; padding: 0 24px 0 10px; border-top: 1px solid #858c93; border-bottom: 1px solid #7f868d; background: linear-gradient(#9299a0, #8c9399); }
.search { width: 500px; height: 31px; display: flex; align-items: center; gap: 6px; padding-left: 5px; border: 1px solid #858c93; border-radius: 4px; background: #9fa6ad; }
.search input { flex: 1; border: 0; padding: 0; background: none; font: 13px Roboto, sans-serif; }
.search input::placeholder { color: #545c64; }
.pager { display: flex; align-items: center; gap: 15px; font-weight: 500; }
.grid { flex: none; width: 100%; table-layout: fixed; border-collapse: collapse; }
.c-check { width: 40px; }
.c-name { width: 110px; }
.c-dns { width: 168px; }
.grid th { height: 42px; padding: 0; font-weight: 500; text-align: left; background: linear-gradient(#979ea5, #8b9299); border-bottom: 1px solid #7f868d; }
.grid td { height: 28px; padding: 0 0 0 10px; font-size: 13px; color: #1c2127; background: #929fae; border-bottom: 1px solid #858c93; }
.grid td:last-child { padding-left: 8px; }
.th { height: 18px; display: flex; align-items: center; justify-content: space-between; padding: 0 7px 0 10px; border-left: 1px solid #7f868d; }
.grid th:last-child .th { padding-left: 9px; border-left: 0; border-right: 1px solid #7f868d; }
.tick { appearance: none; display: block; width: 19px; height: 19px; margin: 0; padding: 2px; border: 1px solid #7f868d; border-radius: 5px; }
.tick::before { content: ""; display: block; height: 13px; border-radius: 3px; background: #2a6099; }
.grid th .tick { margin-left: 10px; }
.grid-sb { margin-top: auto; }
.grid-sb .thumb { flex: 1; margin-right: 200px; background: #898f96; }
.detail { flex: none; height: 140px; padding-top: 7px; display: flex; border-top: 1px solid #7f868d; }
.detail-body { flex: 1; min-width: 0; overflow: hidden; }
.detail-head { height: 24px; display: flex; align-items: center; gap: 4px; padding: 0 10px 0 12px; }
.detail-head b { font-weight: 500; }
.mark { width: 5px; height: 17px; background: #3f6a96; }
.panes { margin-left: auto; display: flex; gap: 9px; }
.pane { width: 15px; height: 14px; border: 2px solid #3a424a; }
.p1 { border-top-width: 10px; }
.p2 { border-top-width: 8px; }
.p3 { border-top-width: 6px; }
.dtabs { display: flex; gap: 6px; margin-top: 17px; padding-left: 6px; height: 34px; box-shadow: inset 0 -1px #7f868d; }
.dtab { padding: 0 12px; border: 1px solid #7f868d; border-radius: 3px 3px 0 0; background: linear-gradient(#969da4, #8b9299); }
.dtab.on { border-top: 2px solid #a5701f; border-bottom: 0; background: #9fa6ad; font-weight: 500; }
.field { padding: 14px 0 0 155px; line-height: 17px; }

/* dialog */
.overlay { position: absolute; inset: 0; display: flex; justify-content: center; align-items: flex-start; padding-top: 16px; }
.modal { width: 70%; border: 1px solid #000; border-radius: 6px 6px 0 0; background: #fff; font: 14px/21px Roboto, sans-serif; color: #444; overflow: hidden; }
.modal-head { height: 61px; display: flex; align-items: center; justify-content: space-between; padding: 6px 28px 0 25px; background: linear-gradient(#fff, #dedede); border-bottom: 1px solid #ccc; }
.modal-head h2 { font-size: 21px; font-weight: 500; }
.modal-body { margin: 0 35px 0 15px; padding: 20px 5px 10px 10px; border-bottom: 1px solid #ccc; }
.alert { display: flex; gap: 25px; padding: 15px 24px 15px 27px; border: 1px solid; border-radius: 4px; margin-bottom: 15px; }
.alert > svg { margin-top: 2px; }
.alert h3 { font-size: 18px; line-height: 24px; font-weight: 400; }
.alert p { color: #444; }
.ok { color: #093; background: #f5fdf6; }
.warn { color: #e07700; background: #fffbe9; padding-left: 26px; gap: 24px; }
.info { display: grid; grid-template-columns: 130px 1fr; column-gap: 12px; line-height: 29px; }
.info dt { text-align: right; font-weight: 700; }
.modal-foot { display: flex; justify-content: flex-end; padding: 16px 40px 16px 0; }
.modal-foot button { width: 58px; height: 32px; border: 2px solid #101010; border-radius: 4px; background: #2e8de0; }

/* console footer */
.awsfoot { flex: none; height: 31px; display: flex; align-items: center; gap: 24px; padding: 0 31px 1px 28px; background: #303e4b; border-bottom: 1px solid #d5d7da; color: #9da4ab; font: 500 12px Roboto, sans-serif; }
.awsfoot .strong { display: flex; align-items: center; gap: 9px; font-size: 14px; font-weight: 700; margin-right: -5px; }
.copy { margin-left: auto; color: #6d7780; font-weight: 400; }

/* downloads */
.downloads { flex: none; height: 48px; display: flex; align-items: center; background: #fff; }
.dl { height: 36px; width: 227px; display: flex; align-items: center; gap: 13px; padding: 0 17px 0 16px; border-right: 1px solid #c4c6c9; }
.dl span { font-family: Lato, sans-serif; }
.dl:first-child { width: 231px; padding-left: 20px; }
.dl button { margin-left: auto; color: #757a80; }
.showall { margin-left: auto; width: 105px; height: 32px; padding-bottom: 1px; border: 1px solid #dadce0; border-radius: 4px; }
.dl-x { margin: 0 10px; color: #757a80; }

/* taskbar */
.taskbar { flex: none; height: 40px; display: flex; background: #0b0b0b; color: #fff; }
.sys { display: flex; margin-right: 3px; }
.sys button { width: 48px; }
.apps { display: flex; gap: 1px; }
.app { width: 48px; position: relative; }
.app.run::after { content: ""; position: absolute; left: 4px; right: 4px; bottom: 0; height: 2px; background: #f07de0; }
.app.on { background: #3c3c3c; }
.app.on::after { left: 0; right: 0; }
.badge { position: absolute; left: 28px; top: 19px; width: 17px; height: 17px; border: 1px solid #8a8a8a; border-radius: 50%; background: #2b2b2b; color: #fff; font-size: 11px; font-weight: 600; line-height: 15px; text-align: center; }
.badge-j { left: 22px; top: 18px; border-color: #f4511e; background: #f4511e; font-weight: 400; }
.tray { margin-left: auto; display: flex; align-items: center; gap: 8px; }
.tray .t-chev { margin: 0 4px 0 14px; }
.lang { margin-left: 4px; }
.clock { width: 72px; text-align: center; line-height: 18px; }
.note { height: 40px; width: 29px; padding: 12px 0 0 1px; position: relative; margin-left: 2px; }
.note .badge { left: 7px; }
.peek { width: 1px; height: 40px; background: #666; margin-right: 4px; }
```
